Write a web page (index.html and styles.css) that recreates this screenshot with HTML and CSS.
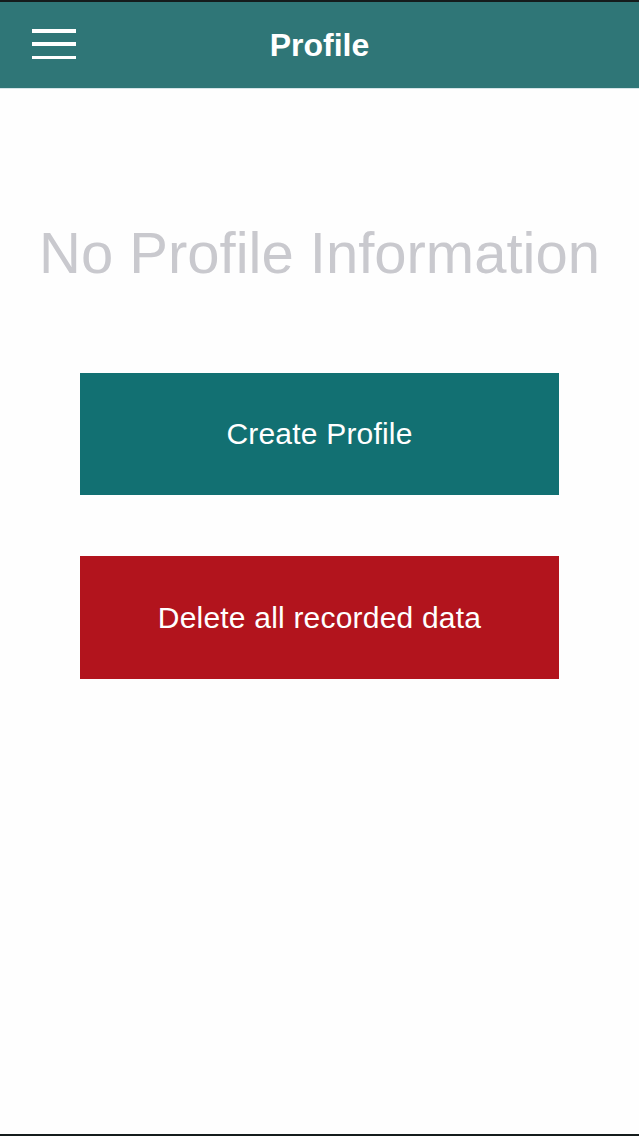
FILE: index.html
```html
<!DOCTYPE html>
<html lang="en">
<head>
<meta charset="utf-8">
<title>Profile</title>
<link rel="stylesheet" href="styles.css">
</head>
<body>
<div class="screen">
  <header class="topbar">
    <button class="menu" aria-label="Menu">
      <span class="bar"></span>
      <span class="bar"></span>
      <span class="bar"></span>
    </button>
    <h1 class="title">Profile</h1>
    <span class="spacer"></span>
  </header>
  <main class="content">
    <p class="empty">No Profile Information</p>
    <div class="actions">
      <button class="btn btn-create">Create Profile</button>
      <button class="btn btn-delete">Delete all recorded data</button>
    </div>
  </main>
</div>
</body>
</html>
```

FILE: styles.css
```css
* { box-sizing: border-box; }
html, body { margin: 0; padding: 0; background: #ffffff; }
body { font-family: "Liberation Sans", Arial, Helvetica, sans-serif; }

.screen {
  width: 639px;
  height: 1136px;
  display: flex;
  flex-direction: column;
  border-top: 2px solid #151c1c;
  border-bottom: 2px solid #151c1c;
  background: #fefefe;
}

.topbar {
  height: 87px;
  flex: none;
  background: #2f7677;
  border-bottom: 1px solid #d5e4e8;
  display: flex;
  align-items: center;
  padding: 0 32px;
}

.menu {
  width: 44px;
  height: 30px;
  padding: 0;
  margin: 0;
  border: 0;
  background: transparent;
  display: flex;
  flex-direction: column;
  justify-content: space-between;
  margin-top: -2px;
}
.bar {
  display: block;
  width: 44px;
  height: 3.5px;
  background: #ffffff;
}

.title {
  flex: 1;
  margin: 0;
  text-align: center;
  color: #ffffff;
  font-size: 32px;
  font-weight: bold;
  line-height: 1;
}
.spacer { width: 44px; }

.content {
  display: flex;
  flex-direction: column;
  align-items: stretch;
}

.empty {
  margin: 135px 0 0 0;
  text-align: center;
  color: #c9c9ce;
  font-size: 58px;
  line-height: 58px;
  white-space: nowrap;
}

.actions {
  display: flex;
  flex-direction: column;
  gap: 61px;
  margin: 91px 80px 0 80px;
}

.btn {
  height: 122px;
  border: 0;
  margin: 0;
  padding: 0;
  color: #ffffff;
  font-family: "Liberation Sans", Arial, Helvetica, sans-serif;
  font-size: 30px;
  letter-spacing: 0.2px;
  text-align: center;
}
.btn-create { background: #127072; }
.btn-delete { background: #b2141d; height: 123px; }
```
